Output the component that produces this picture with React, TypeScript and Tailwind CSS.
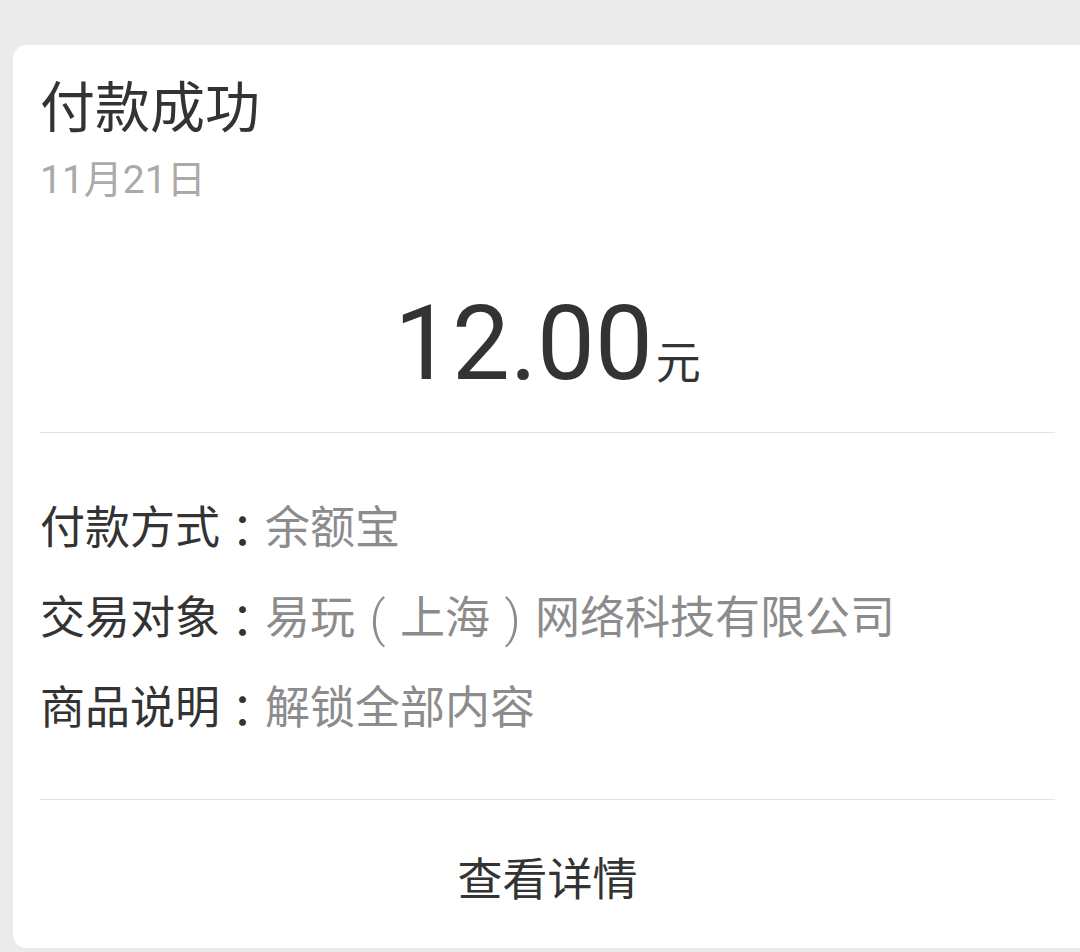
import React from "react";

const font = { fontFamily: "Roboto, 'Noto Sans CJK SC', sans-serif" };
const tc = { fontFamily: "'Noto Sans CJK TC', sans-serif" };

// full-width punctuation centred in its em box, as on the phone
const Paren = ({ ch }: { ch: string }) => (
  <span className="inline-block w-[45px] text-center text-[50px] font-light leading-[46px]">{ch}</span>
);

const rows = [
  { label: "付款方式", value: <>余额宝</> },
  {
    label: "交易对象",
    value: (
      <>
        易玩<Paren ch="(" />上海<Paren ch=")" />网络科技有限公司
      </>
    ),
  },
  { label: "商品说明", value: <>解锁全部内容</> },
];

export default function App() {
  return (
    <div className="min-h-[952px] w-[1080px] overflow-hidden bg-[#ebebeb] pt-[45px] pl-[13px]" style={font}>
      <div className="h-[903px] w-[1080px] rounded-[14px] bg-white pl-[27px] pr-[38px] pt-[34px]">
        <div className="text-[55px] leading-[58px] text-[#333333]">付款成功</div>
        <div className="mt-[23px] text-[39px] leading-[40px] text-[#aaaaaa]">11月21日</div>

        {/* amount */}
        <div className="mt-[94px] flex items-baseline justify-center text-[#333333]">
          <span className="text-[103px] leading-[100px]">12.00</span>
          <span className="ml-[3px] text-[45px] leading-[42px]">元</span>
        </div>

        <div className="mt-[38px] h-px bg-[#e3e3e3]" />

        <div className="flex flex-col gap-[44px] pt-[73px] pb-[67px]">
          {rows.map((r) => (
            <div key={r.label} className="flex h-[46px] items-center text-[45px] leading-[46px]">
              <span className="text-[#333333]">{r.label}</span>
              <span className="text-[#333333]" style={tc}>：</span>
              <span className="flex items-center text-[#8c8c8c]">{r.value}</span>
            </div>
          ))}
        </div>

        <div className="h-px bg-[#e3e3e3]" />

        <div className="flex h-[150px] items-center justify-center pt-[12px] text-[45px] text-[#333333]">
          查看详情
        </div>
      </div>
    </div>
  );
}
